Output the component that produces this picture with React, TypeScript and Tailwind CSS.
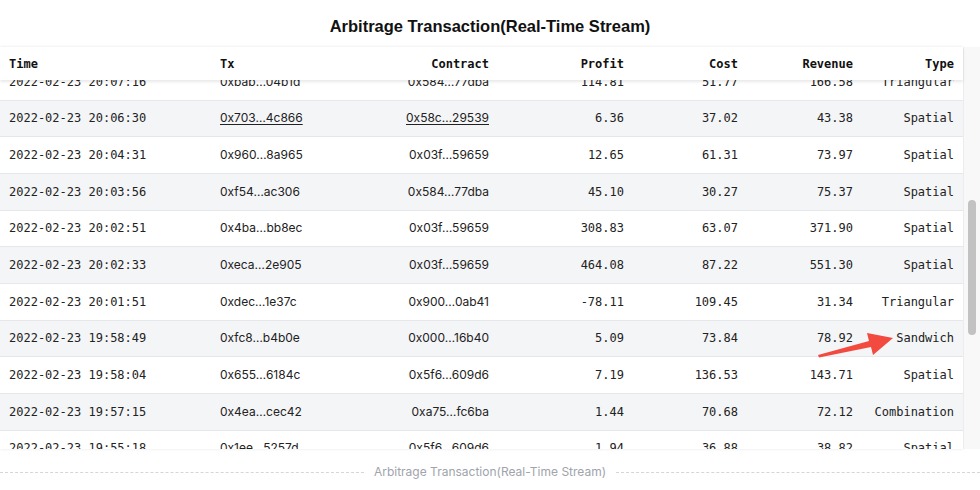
import React from "react";

type Row = {
  time: string;
  tx: string;
  contract: string;
  profit: string;
  cost: string;
  revenue: string;
  type: string;
  hover?: boolean;
};

const rows: Row[] = [
  { time: "2022-02-23 20:07:16", tx: "0xbab…04b1d", contract: "0x584…77dba", profit: "114.81", cost: "51.77", revenue: "166.58", type: "Triangular" },
  { time: "2022-02-23 20:06:30", tx: "0x703…4c866", contract: "0x58c…29539", profit: "6.36", cost: "37.02", revenue: "43.38", type: "Spatial", hover: true },
  { time: "2022-02-23 20:04:31", tx: "0x960…8a965", contract: "0x03f…59659", profit: "12.65", cost: "61.31", revenue: "73.97", type: "Spatial" },
  { time: "2022-02-23 20:03:56", tx: "0xf54…ac306", contract: "0x584…77dba", profit: "45.10", cost: "30.27", revenue: "75.37", type: "Spatial" },
  { time: "2022-02-23 20:02:51", tx: "0x4ba…bb8ec", contract: "0x03f…59659", profit: "308.83", cost: "63.07", revenue: "371.90", type: "Spatial" },
  { time: "2022-02-23 20:02:33", tx: "0xeca…2e905", contract: "0x03f…59659", profit: "464.08", cost: "87.22", revenue: "551.30", type: "Spatial" },
  { time: "2022-02-23 20:01:51", tx: "0xdec…1e37c", contract: "0x900…0ab41", profit: "-78.11", cost: "109.45", revenue: "31.34", type: "Triangular" },
  { time: "2022-02-23 19:58:49", tx: "0xfc8…b4b0e", contract: "0x000…16b40", profit: "5.09", cost: "73.84", revenue: "78.92", type: "Sandwich" },
  { time: "2022-02-23 19:58:04", tx: "0x655…6184c", contract: "0x5f6…609d6", profit: "7.19", cost: "136.53", revenue: "143.71", type: "Spatial" },
  { time: "2022-02-23 19:57:15", tx: "0x4ea…cec42", contract: "0xa75…fc6ba", profit: "1.44", cost: "70.68", revenue: "72.12", type: "Combination" },
  { time: "2022-02-23 19:55:18", tx: "0x1ee…5257d", contract: "0x5f6…609d6", profit: "1.94", cost: "36.88", revenue: "38.82", type: "Spatial" },
];

const cols = "grid grid-cols-[211px_144px_143px_135px_114px_115px_101px]";
const mono = "font-['DejaVu_Sans_Mono',monospace] text-[12px]";
const sans = "font-['Inter','Liberation_Sans',sans-serif] text-[12px]";

const TableRow: React.FC<{ row: Row; odd: boolean }> = ({ row, odd }) => (
  <div
    className={`${cols} h-[36.67px] items-center border-b border-[#e6e7eb] text-[#222] ${
      odd ? "bg-[#f4f5f7]" : "bg-white"
    }`}
  >
    <div className={`${mono} px-[9px]`}>{row.time}</div>
    <div className={`${sans} px-[9px]`}>
      <span className={row.hover ? "underline underline-offset-2" : ""}>{row.tx}</span>
    </div>
    <div className={`${sans} px-[9px] text-right`}>
      <span className={row.hover ? "underline underline-offset-2" : ""}>{row.contract}</span>
    </div>
    <div className={`${mono} px-[9px] text-right`}>{row.profit}</div>
    <div className={`${mono} px-[9px] text-right`}>{row.cost}</div>
    <div className={`${mono} px-[9px] text-right`}>{row.revenue}</div>
    <div className={`${mono} px-[9px] text-right`}>{row.type}</div>
  </div>
);

export default function App() {
  return (
    <div className="relative w-[980px] h-[490px] bg-white flex flex-col overflow-hidden">
      <div className="h-[47px] pt-[14px] text-center font-['Liberation_Sans',Arial,sans-serif] text-[16.5px] leading-[24px] font-bold text-[#111]">
        Arbitrage Transaction(Real-Time Stream)
      </div>

      <div className="flex h-[402px]">
        <div className="w-[963px] flex flex-col bg-white shadow-[0_0_3px_rgba(0,0,0,0.1)]">
          <div className={`${cols} relative z-10 h-[33px] pt-[1px] items-center bg-white shadow-[0_2px_3px_rgba(0,0,0,0.09)] text-[#111]`}>
            <div className={`${mono} px-[9px] font-bold`}>Time</div>
            <div className={`${mono} px-[9px] font-bold`}>Tx</div>
            <div className={`${mono} px-[9px] font-bold text-right`}>Contract</div>
            <div className={`${mono} px-[9px] font-bold text-right`}>Profit</div>
            <div className={`${mono} px-[9px] font-bold text-right`}>Cost</div>
            <div className={`${mono} px-[9px] font-bold text-right`}>Revenue</div>
            <div className={`${mono} px-[9px] font-bold text-right`}>Type</div>
          </div>
          <div className="flex-1 overflow-hidden">
            <div className="-mt-[16px]">
              {rows.map((r, i) => (
                <TableRow key={r.time} row={r} odd={i % 2 === 1} />
              ))}
            </div>
          </div>
        </div>
        <div className="w-[17px] bg-[#f8f8f8] border-l border-[#ececec] pt-[153px] flex flex-col items-center">
          <div className="w-[8px] h-[135px] rounded-full bg-[#c2c2c2]" />
        </div>
      </div>

      <div className="flex items-center gap-[10px] pt-[15px]">
        <div className="flex-1 border-t border-dashed border-[#d4d6da]" />
        <div className="font-['Inter','Liberation_Sans',sans-serif] text-[12px] leading-[16px] text-[#a0a4ab]">
          Arbitrage Transaction(Real-Time Stream)
        </div>
        <div className="flex-1 border-t border-dashed border-[#d4d6da]" />
      </div>

      <svg className="absolute left-0 top-0 pointer-events-none" width="980" height="490">
        <polygon
          points="818,355 869,341 867,333 893,338 873,355 871,347 819,357.5"
          fill="#f24a3f"
        />
      </svg>
    </div>
  );
}
